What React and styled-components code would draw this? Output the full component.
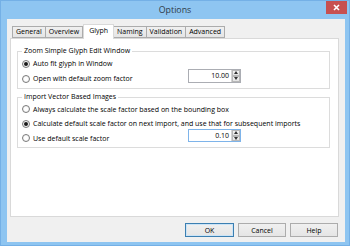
import React from 'react';
import styled, { createGlobalStyle } from 'styled-components';

const GlobalStyle = createGlobalStyle`
  html, body {
    margin: 0;
    padding: 0;
    background: #ffffff;
  }
  body {
    font-family: "Open Sans", "Noto Sans", sans-serif;
    font-size: 7px;
    color: #000;
  }
`;

const Frame = styled.div`
  width: 350px;
  height: 246px;
  box-sizing: border-box;
  background: #8ec5f1;
  border: 1px solid #74b0e6;
  display: flex;
  flex-direction: column;
`;

const TitleBar = styled.div`
  height: 18px;
  display: grid;
  grid-template-columns: 1fr auto 1fr;
  align-items: start;
`;

const Title = styled.div`
  grid-column: 2;
  font-size: 8.8px;
  line-height: 18px;
  color: #2f3b48;
`;

const CloseButton = styled.div`
  grid-column: 3;
  justify-self: end;
  width: 21px;
  height: 13px;
  margin-right: 2px;
  background: #c75050;
  display: flex;
  align-items: center;
  justify-content: center;
`;

const Client = styled.div`
  flex: 1;
  margin: 0 4px 5px 6px;
  background: #f0f0f0;
  padding: 4px 6px 5px 3px;
  display: flex;
  flex-direction: column;
`;

const TabStrip = styled.div`
  height: 15px;
  display: flex;
  align-items: flex-end;
  padding-left: 2px;
`;

const Tab = styled.div`
  height: ${p => (p.active ? '15px' : '12px')};
  box-sizing: border-box;
  padding: 0 ${p => (p.active ? '5px' : '3px')};
  margin-bottom: ${p => (p.active ? '-1px' : '0')};
  border: 1px solid ${p => (p.active ? '#d9d9d9' : '#acacac')};
  border-bottom: ${p => (p.active ? 'none' : '1px solid #acacac')};
  border-left: ${p => (p.first || p.active ? '' : 'none')};
  background: ${p => (p.active ? '#ffffff' : 'linear-gradient(#f0f0f0, #e5e5e5)')};
  line-height: ${p => (p.active ? '12px' : '10px')};
  position: relative;
  z-index: ${p => (p.active ? 1 : 0)};
  white-space: nowrap;
`;

const Panel = styled.div`
  height: 179px;
  box-sizing: border-box;
  background: #ffffff;
  border: 1px solid #d9d9d9;
  padding: 7px 8px 0 6px;
  display: flex;
  flex-direction: column;
  gap: 3px;
`;

const Group = styled.fieldset`
  margin: 0;
  padding: 0 4px 2px 4px;
  border: 1px solid #dcdcdc;
  border-radius: 0;
`;

const Legend = styled.legend`
  padding: 0 2px;
  line-height: 10px;
`;

const Row = styled.div`
  height: ${p => p.h || 15}px;
  display: flex;
  align-items: center;
  white-space: nowrap;
`;

const SpinRow = styled(Row)`
  display: grid;
  grid-template-columns: 166px 53px;
`;

const Option = styled.label`
  display: flex;
  align-items: center;
  gap: 3px;
`;

const RadioDot = styled.span`
  width: 8px;
  height: 8px;
  box-sizing: border-box;
  border-radius: 50%;
  border: 1px solid #7a7a7a;
  background: radial-gradient(circle, #ffffff 30%, #ececec 100%);
  display: flex;
  align-items: center;
  justify-content: center;
  &::after {
    content: '';
    width: 4px;
    height: 4px;
    border-radius: 50%;
    background: ${p => (p.checked ? '#1a1a1a' : 'transparent')};
  }
`;

const Spinner = styled.div`
  width: 53px;
  height: ${p => p.h}px;
  margin-top: ${p => p.shift}px;
  box-sizing: border-box;
  border: 1px solid ${p => (p.focused ? '#7eb4ea' : '#abadb3')};
  background: #fff;
  display: flex;
`;

const SpinValue = styled.div`
  flex: 1;
  padding-right: 2px;
  display: flex;
  align-items: center;
  justify-content: flex-end;
`;

const SpinButtons = styled.div`
  width: 8px;
  display: flex;
  flex-direction: column;
  border-left: 1px solid #d4d4d4;
`;

const SpinButton = styled.div`
  flex: 1;
  background: linear-gradient(#f4f4f4, #e3e3e3);
  border: 1px solid #b8b8b8;
  display: flex;
  align-items: center;
  justify-content: center;
`;

const ButtonBar = styled.div`
  margin-top: 6px;
  display: flex;
  justify-content: flex-end;
  gap: 4px;
  padding-right: 1px;
`;

const Button = styled.div`
  width: ${p => p.w || 48}px;
  height: 14px;
  box-sizing: border-box;
  border: 1px solid ${p => (p.primary ? '#3c7fb1' : '#acacac')};
  box-shadow: ${p => (p.primary ? 'inset 0 0 0 1px #cbe4f7' : 'none')};
  background: linear-gradient(#f0f0f0, #e5e5e5);
  display: flex;
  align-items: center;
  justify-content: center;
`;

const Arrow = ({ up }) => (
  <svg width="4" height="3" viewBox="0 0 4 3">
    <path d={up ? 'M0 3 L2 0 L4 3 Z' : 'M0 0 L2 3 L4 0 Z'} fill="#333" />
  </svg>
);

const NumberBox = ({ value, h = 14, shift = 0, focused }) => (
  <Spinner h={h} shift={shift} focused={focused}>
    <SpinValue>{value}</SpinValue>
    <SpinButtons>
      <SpinButton>
        <Arrow up />
      </SpinButton>
      <SpinButton>
        <Arrow />
      </SpinButton>
    </SpinButtons>
  </Spinner>
);

const Radio = ({ checked, children }) => (
  <Option>
    <RadioDot checked={checked} />
    {children}
  </Option>
);

const tabs = ['General', 'Overview', 'Glyph', 'Naming', 'Validation', 'Advanced'];

export default function App() {
  return (
    <>
      <GlobalStyle />
      <Frame>
        <TitleBar>
          <Title>Options</Title>
          <CloseButton>
            <svg width="7" height="7" viewBox="0 0 7 7">
              <path d="M1 1 L6 6 M6 1 L1 6" stroke="#fff" strokeWidth="1.6" />
            </svg>
          </CloseButton>
        </TitleBar>
        <Client>
          <TabStrip>
            {tabs.map((t, i) => (
              <Tab key={t} active={t === 'Glyph'} first={i === 0}>
                {t}
              </Tab>
            ))}
          </TabStrip>
          <Panel>
            <Group>
              <Legend>Zoom Simple Glyph Edit Window</Legend>
              <Row>
                <Radio checked>Auto fit glyph in Window</Radio>
              </Row>
              <SpinRow>
                <Radio>Open with default zoom factor</Radio>
                <NumberBox value="10.00" shift={-6} />
              </SpinRow>
            </Group>
            <Group>
              <Legend>Import Vector Based Images</Legend>
              <Row h={14}>
                <Radio>Always calculate the scale factor based on the bounding box</Radio>
              </Row>
              <Row h={15}>
                <Radio checked>
                  Calculate default scale factor on next import, and use that for subsequent imports
                </Radio>
              </Row>
              <SpinRow h={14}>
                <Radio>Use default scale factor</Radio>
                <NumberBox value="0.10" h={13} shift={-5} focused />
              </SpinRow>
            </Group>
          </Panel>
          <ButtonBar>
            <Button primary w={49}>OK</Button>
            <Button>Cancel</Button>
            <Button>Help</Button>
          </ButtonBar>
        </Client>
      </Frame>
    </>
  );
}
